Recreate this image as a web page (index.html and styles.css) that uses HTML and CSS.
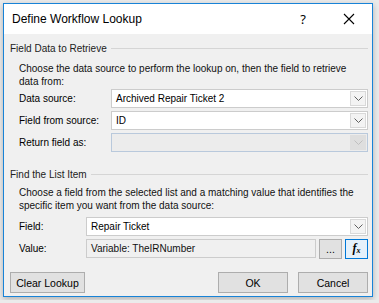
FILE: index.html
```html
<!DOCTYPE html>
<html lang="en">
<head>
    <meta charset="UTF-8">
    <title>Define Workflow Lookup</title>
    <link rel="stylesheet" href="styles.css">
</head>
<body>
    <div class="dialog">
        <div class="titlebar">
            <span class="title">Define Workflow Lookup</span>
            <span class="help">?</span>
            <span class="close">
                <svg width="12" height="12" viewBox="0 0 12 12"><path d="M1 1 L11 11 M11 1 L1 11" stroke="#000" stroke-width="1.1"/></svg>
            </span>
        </div>
        <div class="content">
            <div class="group-head"><span>Field Data to Retrieve</span><div class="rule"></div></div>
            <div class="group-body">
                <p class="desc">Choose the data source to perform the lookup on, then the field to retrieve<br>data from:</p>
                <div class="row">
                    <label class="lbl wide">Data source:</label>
                    <div class="combo"><span class="val">Archived Repair Ticket 2</span><span class="drop"><svg width="9" height="5" viewBox="0 0 9 5"><path d="M0.5 0.5 L4.5 4.5 L8.5 0.5" fill="none" stroke="#606060"/></svg></span></div>
                </div>
                <div class="row">
                    <label class="lbl wide">Field from source:</label>
                    <div class="combo"><span class="val">ID</span><span class="drop"><svg width="9" height="5" viewBox="0 0 9 5"><path d="M0.5 0.5 L4.5 4.5 L8.5 0.5" fill="none" stroke="#606060"/></svg></span></div>
                </div>
                <div class="row">
                    <label class="lbl wide">Return field as:</label>
                    <div class="combo disabled"><span class="val"></span><span class="drop"><svg width="9" height="5" viewBox="0 0 9 5"><path d="M0.5 0.5 L4.5 4.5 L8.5 0.5" fill="none" stroke="#bfbfbf"/></svg></span></div>
                </div>
            </div>

            <div class="group-head second"><span>Find the List Item</span><div class="rule"></div></div>
            <div class="group-body">
                <p class="desc">Choose a field from the selected list and a matching value that identifies the<br>specific item you want from the data source:</p>
                <div class="row">
                    <label class="lbl">Field:</label>
                    <div class="combo"><span class="val">Repair Ticket</span><span class="drop"><svg width="9" height="5" viewBox="0 0 9 5"><path d="M0.5 0.5 L4.5 4.5 L8.5 0.5" fill="none" stroke="#606060"/></svg></span></div>
                </div>
                <div class="row">
                    <label class="lbl">Value:</label>
                    <div class="textbox">Variable: TheIRNumber</div>
                    <button class="btn small">...</button>
                    <button class="btn small fx">f<sub>x</sub></button>
                </div>
            </div>

            <div class="actions">
                <button class="btn clear">Clear Lookup</button>
                <div class="spacer"></div>
                <button class="btn std">OK</button>
                <button class="btn std">Cancel</button>
            </div>
        </div>
    </div>
</body>
</html>
```
FILE: styles.css
```css
* {
    margin: 0;
    padding: 0;
    box-sizing: border-box;
}

body {
    background-color: #ebebeb;
    font-family: "Liberation Sans", Arial, sans-serif;
    font-size: 10px;
    color: #000;
    padding: 3px;
}

.dialog {
    width: 370px;
    height: 294px;
    background-color: #f0f0f0;
    border: 1px solid #1883d7;
    box-shadow: 0 2px 6px rgba(0, 0, 0, 0.25);
    display: flex;
    flex-direction: column;
}

.titlebar {
    height: 30px;
    background-color: #fff;
    display: flex;
    align-items: center;
    padding-left: 8px;
}

.title {
    font-family: "Liberation Sans", Arial, sans-serif;
    font-size: 12px;
    flex: 1;
    padding-bottom: 1px;
}

.help {
    font-family: "Noto Sans", sans-serif;
    font-size: 13px;
    width: 46px;
    text-align: center;
}

.close {
    width: 46px;
    display: flex;
    justify-content: center;
}

.content {
    padding: 7px 4px 0 6px;
    flex: 1;
    display: flex;
    flex-direction: column;
}

.group-head {
    display: flex;
    align-items: center;
    gap: 4px;
    color: #222;
    height: 14px;
}

.group-head.second {
    margin-top: 15px;
}

.rule {
    flex: 1;
    height: 1px;
    background-color: #d5d5d5;
}

.group-body {
    padding-left: 9px;
}

.desc {
    margin-top: 7px;
    line-height: 13px;
    color: #111;
    white-space: nowrap;
}

.row {
    display: flex;
    align-items: center;
    margin-top: 3px;
    height: 19px;
}

.desc + .row {
    margin-top: 1px;
}

.group-head.second + .group-body .desc {
    margin-top: 5px;
}

.group-head.second + .group-body .desc + .row {
    margin-top: 5px;
}

.lbl {
    width: 67px;
    flex-shrink: 0;
}

.lbl.wide {
    width: 92px;
}

.combo {
    flex: 1;
    height: 19px;
    background-color: #fff;
    border: 1px solid #cccccc;
    display: flex;
    align-items: center;
    padding-left: 4px;
}

.combo .val {
    flex: 1;
}

.drop {
    width: 16px;
    height: 15px;
    margin-right: 1px;
    border: 1px solid #d9d9d9;
    background-color: #f3f3f3;
    display: flex;
    align-items: center;
    justify-content: center;
}

.combo.disabled {
    background-color: #ececec;
    border-color: #b9c9dc;
}

.combo.disabled .drop {
    background-color: #dedede;
    border-color: #dedede;
}

.textbox {
    flex: 1;
    height: 19px;
    border: 1px solid #cccccc;
    background-color: #f0f0f0;
    padding-left: 4px;
    line-height: 17px;
    color: #111;
}

.btn {
    font-family: "Liberation Sans", Arial, sans-serif;
    font-size: 10.5px;
    background-color: #e1e1e1;
    border: 1px solid #adadad;
    color: #000;
}

.btn.small {
    width: 23px;
    height: 20px;
    margin-left: 3px;
}

.btn.fx {
    border-color: #0078d7;
    background-color: #e5f1fb;
    font-family: "Liberation Serif", serif;
    font-style: italic;
    font-weight: bold;
    font-size: 12px;
}

.btn.fx sub {
    font-size: 8px;
    vertical-align: -1px;
}

.actions {
    display: flex;
    margin-top: 14px;
    gap: 10px;
}

.spacer {
    flex: 1;
}

.btn.clear {
    width: 75px;
    height: 21px;
}

.btn.std {
    width: 70px;
    height: 21px;
}
```
